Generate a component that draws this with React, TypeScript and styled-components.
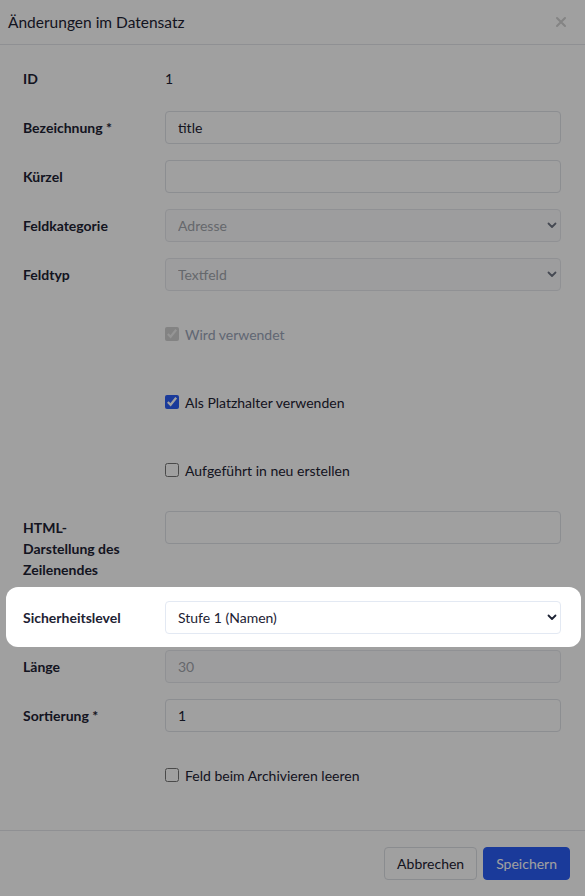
import React from "react";
import styled, { createGlobalStyle } from "styled-components";

const GlobalStyle = createGlobalStyle`
  html, body { margin: 0; padding: 0; background: #ffffff; }
  body { font-family: Lato, "Noto Sans", sans-serif; color: #1d2233; }
  * { box-sizing: border-box; }
`;

const Modal = styled.div`
  width: 585px;
  min-height: 896px;
  background: #ffffff;
  display: flex;
  flex-direction: column;
`;

const Header = styled.div`
  height: 45px;
  border-bottom: 1px solid #e4e6ea;
  display: flex;
  align-items: center;
  justify-content: space-between;
  padding: 0 18px 0 8px;
`;

const Title = styled.h5`
  margin: 0;
  font-size: 15.5px;
  font-weight: 400;
  color: #1d2233;
`;

const CloseButton = styled.button`
  border: 0;
  background: transparent;
  padding: 0;
  width: 12px;
  height: 12px;
  display: flex;
  color: #d2d2d2;
`;

const Body = styled.div`
  flex: 1;
  padding: 17px 24px 30px 23px;
  display: flex;
  flex-direction: column;
  gap: 16px;
`;

const Row = styled.div<{ $check?: boolean }>`
  display: grid;
  grid-template-columns: 142px 1fr;
  align-items: ${(p) => (p.$check ? "center" : "start")};
  min-height: ${(p) => (p.$check ? "52px" : "33px")};
`;

const Spotlight = styled(Row)`
  position: relative;
  z-index: 20;
  background: #ffffff;
  border-radius: 12px;
  margin: -14px -20px -13px -17px;
  padding: 14px 20px 13px 17px;
`;

const Label = styled.label`
  font-size: 14px;
  font-weight: 700;
  line-height: 21px;
  padding: 6px 34px 5px 0;
  color: #1d2233;
`;

const Value = styled.div`
  font-size: 14px;
  line-height: 21px;
  padding: 6px 0;
`;

const TextInput = styled.input`
  width: 100%;
  height: 33px;
  border: 1px solid #dfe2e7;
  border-radius: 4px;
  padding: 0 12px;
  font-family: Lato, "Noto Sans", sans-serif;
  font-size: 14px;
  color: #1d2233;
  background: #ffffff;
  outline: none;
  &:disabled {
    background: #fbfbfc;
    color: #a2a6ad;
    border-color: #e6e8ec;
  }
`;

const SelectWrap = styled.div`
  position: relative;
  width: 100%;
`;

const Select = styled.select<{ $focus?: boolean }>`
  width: 100%;
  height: 33px;
  appearance: none;
  border: 1px solid ${(p) => (p.$focus ? "#e3e9f3" : "#dfe2e7")};
  border-radius: 4px;
  padding: 0 30px 0 12px;
  font-family: Lato, "Noto Sans", sans-serif;
  font-size: 14px;
  color: #1d2233;
  background: #ffffff;
  outline: none;
  &:disabled {
    background: #fbfbfc;
    color: #a2a6ad;
    border-color: #e6e8ec;
    opacity: 1;
  }
`;

const Chevron = styled.svg<{ $muted?: boolean }>`
  position: absolute;
  right: 4px;
  top: 13px;
  width: 10px;
  height: 7px;
  pointer-events: none;
  color: ${(p) => (p.$muted ? "#6f7584" : "#1d2233")};
`;

const CheckLabel = styled.label<{ $disabled?: boolean }>`
  display: flex;
  align-items: center;
  gap: 6px;
  font-size: 14px;
  line-height: 21px;
  margin-top: 2px;
  color: ${(p) => (p.$disabled ? "#9aa4b8" : "#1d2233")};
`;

const Check = styled.input`
  width: 14px;
  height: 14px;
  margin: 0;
  accent-color: #2a5df5;
`;

const Footer = styled.div`
  border-top: 1px solid #e4e6ea;
  padding: 16px 15px 16px;
  display: flex;
  justify-content: flex-end;
  gap: 6px;
`;

const Button = styled.button<{ $primary?: boolean }>`
  height: 33px;
  padding: 0 12px;
  border-radius: 4px;
  font-family: Lato, "Noto Sans", sans-serif;
  font-size: 14px;
  border: 1px solid ${(p) => (p.$primary ? "#2a5df5" : "#dcdfe4")};
  background: ${(p) => (p.$primary ? "#2a5df5" : "#ffffff")};
  color: ${(p) => (p.$primary ? "#ffffff" : "#1d2233")};
`;

const Overlay = styled.div`
  position: fixed;
  inset: 0;
  background: rgba(0, 0, 0, 0.373);
  z-index: 10;
  pointer-events: none;
`;

const ChevronIcon = ({ muted }: { muted?: boolean }) => (
  <Chevron $muted={muted} viewBox="0 0 10 7">
    <path d="M1.5 1.5 L5 5 L8.5 1.5" fill="none" stroke="currentColor" strokeWidth="1.8" strokeLinecap="round" strokeLinejoin="round" />
  </Chevron>
);

export default function App() {
  return (
    <>
      <GlobalStyle />
      <Modal>
        <Header>
          <Title>Änderungen im Datensatz</Title>
          <CloseButton aria-label="Schließen">
            <svg viewBox="0 0 12 12" width="12" height="12">
              <path d="M2 2 L10 10 M10 2 L2 10" stroke="currentColor" strokeWidth="2" strokeLinecap="round" />
            </svg>
          </CloseButton>
        </Header>
        <Body>
          <Row>
            <Label>ID</Label>
            <Value>1</Value>
          </Row>
          <Row>
            <Label>Bezeichnung *</Label>
            <TextInput defaultValue="title" />
          </Row>
          <Row>
            <Label>Kürzel</Label>
            <TextInput defaultValue="" />
          </Row>
          <Row>
            <Label>Feldkategorie</Label>
            <SelectWrap>
              <Select disabled defaultValue="Adresse">
                <option>Adresse</option>
              </Select>
              <ChevronIcon muted />
            </SelectWrap>
          </Row>
          <Row>
            <Label>Feldtyp</Label>
            <SelectWrap>
              <Select disabled defaultValue="Textfeld">
                <option>Textfeld</option>
              </Select>
              <ChevronIcon muted />
            </SelectWrap>
          </Row>
          <Row $check>
            <span />
            <CheckLabel $disabled>
              <Check type="checkbox" defaultChecked disabled />
              Wird verwendet
            </CheckLabel>
          </Row>
          <Row $check>
            <span />
            <CheckLabel>
              <Check type="checkbox" defaultChecked />
              Als Platzhalter verwenden
            </CheckLabel>
          </Row>
          <Row $check>
            <span />
            <CheckLabel>
              <Check type="checkbox" />
              Aufgeführt in neu erstellen
            </CheckLabel>
          </Row>
          <Row>
            <Label>HTML-Darstellung des Zeilenendes</Label>
            <TextInput defaultValue="" />
          </Row>
          <Spotlight>
            <Label>Sicherheitslevel</Label>
            <SelectWrap>
              <Select $focus defaultValue="Stufe 1 (Namen)">
                <option>Stufe 1 (Namen)</option>
              </Select>
              <ChevronIcon />
            </SelectWrap>
          </Spotlight>
          <Row>
            <Label>Länge</Label>
            <TextInput disabled defaultValue="30" />
          </Row>
          <Row>
            <Label>Sortierung *</Label>
            <TextInput defaultValue="1" />
          </Row>
          <Row $check>
            <span />
            <CheckLabel>
              <Check type="checkbox" />
              Feld beim Archivieren leeren
            </CheckLabel>
          </Row>
        </Body>
        <Footer>
          <Button>Abbrechen</Button>
          <Button $primary>Speichern</Button>
        </Footer>
      </Modal>
      <Overlay />
    </>
  );
}
